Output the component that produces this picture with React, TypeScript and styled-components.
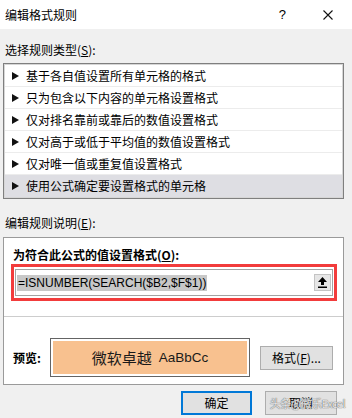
import React from 'react';
import styled, { createGlobalStyle } from 'styled-components';

const GlobalStyle = createGlobalStyle`
  html, body {
    margin: 0;
    padding: 0;
    background: #f0f0f0;
  }
  body {
    font-family: 'Noto Sans CJK SC', 'Liberation Sans', sans-serif;
    font-size: 12px;
    color: #000;
  }
`;

const ruleTypes = [
  '基于各自值设置所有单元格的格式',
  '只为包含以下内容的单元格设置格式',
  '仅对排名靠前或靠后的数值设置格式',
  '仅对高于或低于平均值的数值设置格式',
  '仅对唯一值或重复值设置格式',
  '使用公式确定要设置格式的单元格'
];

const App = () => {
  return (
    <>
      <GlobalStyle />
      <Dialog>
        <TitleBar>
          <Title>编辑格式规则</Title>
          <Help>?</Help>
          <svg width="10" height="10" viewBox="0 0 10 10">
            <path d="M0.5 0.5 L9.5 9.5 M9.5 0.5 L0.5 9.5" stroke="#111" strokeWidth="1.1" />
          </svg>
        </TitleBar>

        <Body>
          <SectionLabel top={13} bottom={5}>
            选择规则类型(<u>S</u>):
          </SectionLabel>
          <RuleList>
            {ruleTypes.map((label, i) => (
              <RuleRow key={label} selected={i === ruleTypes.length - 1} last={i === ruleTypes.length - 1}>
                <svg width="7" height="8" viewBox="0 0 7 8">
                  <polygon points="0,0 7,4 0,8" fill="#111" />
                </svg>
                <span>{label}</span>
              </RuleRow>
            ))}
          </RuleList>

          <SectionLabel top={16} bottom={6}>
            编辑规则说明(<u>E</u>):
          </SectionLabel>
          <DescBox>
            <BoldLabel>
              为符合此公式的值设置格式(<u>O</u>):
            </BoldLabel>
            <RedFrame>
              <FormulaInput>
                <Selected>=ISNUMBER(SEARCH($B2,$F$1))</Selected>
                <CollapseButton>
                  <svg width="9" height="11" viewBox="0 0 9 11">
                    <polygon points="4.5,0 9,5 6,5 6,8 3,8 3,5 0,5" fill="#000" />
                    <rect x="0" y="9.5" width="9" height="1.5" fill="#000" />
                  </svg>
                </CollapseButton>
              </FormulaInput>
            </RedFrame>
            <Divider />
            <PreviewRow>
              <PreviewLabel>预览:</PreviewLabel>
              <PreviewBox>
                <PreviewFill>
                  <span>微软卓越</span>
                  <Latin>AaBbCc</Latin>
                </PreviewFill>
              </PreviewBox>
              <Button width={73}>
                格式(<u>F</u>)...
              </Button>
            </PreviewRow>
          </DescBox>

          <ButtonRow>
            <Button width={71} primary>
              确定
            </Button>
            <Button width={72}>取消</Button>
            <Watermark>头条@微乐Excel</Watermark>
          </ButtonRow>
        </Body>
      </Dialog>
    </>
  );
};

export default App;

const Dialog = styled.div`
  width: 352px;
  height: 418px;
  background: #f0f0f0;
  display: flex;
  flex-direction: column;
  overflow: hidden;
`;

const TitleBar = styled.div`
  height: 29px;
  background: #fff;
  display: flex;
  align-items: center;
  padding: 0 19px 0 5px;
  flex-shrink: 0;
`;

const Title = styled.div`
  flex: 1;
  line-height: 16px;
`;

const Help = styled.div`
  font-family: 'Liberation Sans', sans-serif;
  font-size: 13px;
  margin-right: 37px;
  line-height: 16px;
`;

const Body = styled.div`
  display: flex;
  flex-direction: column;
  padding: 0 8px 0 3px;
`;

const SectionLabel = styled.div<{ top: number; bottom: number }>`
  line-height: 16px;
  padding-left: 2px;
  margin-top: ${({ top }) => top}px;
  margin-bottom: ${({ bottom }) => bottom}px;
`;

const RuleList = styled.div`
  background: #fff;
  border: 1px solid #7f7f7f;
  box-shadow: inset 0 0 0 1px #d6d6d6;
  padding: 1px;
  display: flex;
  flex-direction: column;
`;

const RuleRow = styled.div<{ selected?: boolean; last?: boolean }>`
  height: 22px;
  box-sizing: border-box;
  display: flex;
  align-items: center;
  gap: 7px;
  padding-left: 7px;
  background: ${({ selected }) => (selected ? '#dedee3' : '#fff')};
  border-bottom: ${({ last }) => (last ? 'none' : '1px solid #ececec')};
  span {
    line-height: 16px;
  }
`;

const DescBox = styled.div`
  background: #fff;
  border: 1px solid #9a9a9a;
  height: 148px;
  box-sizing: border-box;
  display: flex;
  flex-direction: column;
`;

const BoldLabel = styled.div`
  font-weight: bold;
  line-height: 16px;
  padding: 9px 0 0 9px;
`;

const RedFrame = styled.div`
  margin: 1px 0 0 7px;
  width: 326px;
  height: 37px;
  box-sizing: border-box;
  border: 3px solid #f23c3c;
  padding: 2px 1px 2px 1px;
  display: flex;
`;

const FormulaInput = styled.div`
  flex: 1;
  border: 1px solid #a3a3a3;
  display: flex;
  align-items: center;
  justify-content: space-between;
  padding: 0 1px 0 1px;
`;

const Selected = styled.span`
  font-family: 'Liberation Sans', sans-serif;
  font-size: 12px;
  line-height: 16px;
  background: #c8c8c8;
  padding: 0 1px;
`;

const CollapseButton = styled.div`
  width: 17px;
  height: 17px;
  box-sizing: border-box;
  background: #e6e6e6;
  border: 1px solid #c4c4c4;
  display: flex;
  align-items: center;
  justify-content: center;
`;

const Divider = styled.div`
  height: 1px;
  background: #cdcdcd;
  margin-top: 15px;
`;

const PreviewRow = styled.div`
  display: flex;
  align-items: center;
  margin-top: 21px;
  padding-left: 9px;
`;

const PreviewLabel = styled.div`
  width: 37px;
  font-weight: bold;
  line-height: 16px;
`;

const PreviewBox = styled.div`
  width: 200px;
  height: 39px;
  box-sizing: border-box;
  border: 1px solid #646464;
  padding: 2px;
  margin-right: 10px;
  display: flex;
`;

const PreviewFill = styled.div`
  flex: 1;
  background: #f8c18f;
  display: flex;
  align-items: center;
  justify-content: center;
  gap: 7px;
  font-size: 15px;
  color: #1a1a1a;
`;

const Latin = styled.span`
  font-family: 'Liberation Sans', sans-serif;
  font-size: 13.5px;
`;

const Button = styled.div<{ width: number; primary?: boolean }>`
  width: ${({ width }) => width}px;
  height: 24px;
  box-sizing: border-box;
  background: #e1e1e1;
  border: ${({ primary }) => (primary ? '2px solid #0078d7' : '1px solid #adadad')};
  display: flex;
  align-items: center;
  justify-content: center;
  line-height: 16px;
`;

const ButtonRow = styled.div`
  position: relative;
  display: flex;
  justify-content: flex-end;
  gap: 13px;
  margin-top: 6px;
  padding-right: 7px;
`;

const Watermark = styled.div`
  position: absolute;
  right: -1px;
  top: 4px;
  font-size: 11px;
  line-height: 16px;
  letter-spacing: -0.5px;
  color: rgba(255, 255, 255, 0.85);
  text-shadow: 0 0 1px #666, 0 0 1px #666;
  pointer-events: none;
`;
